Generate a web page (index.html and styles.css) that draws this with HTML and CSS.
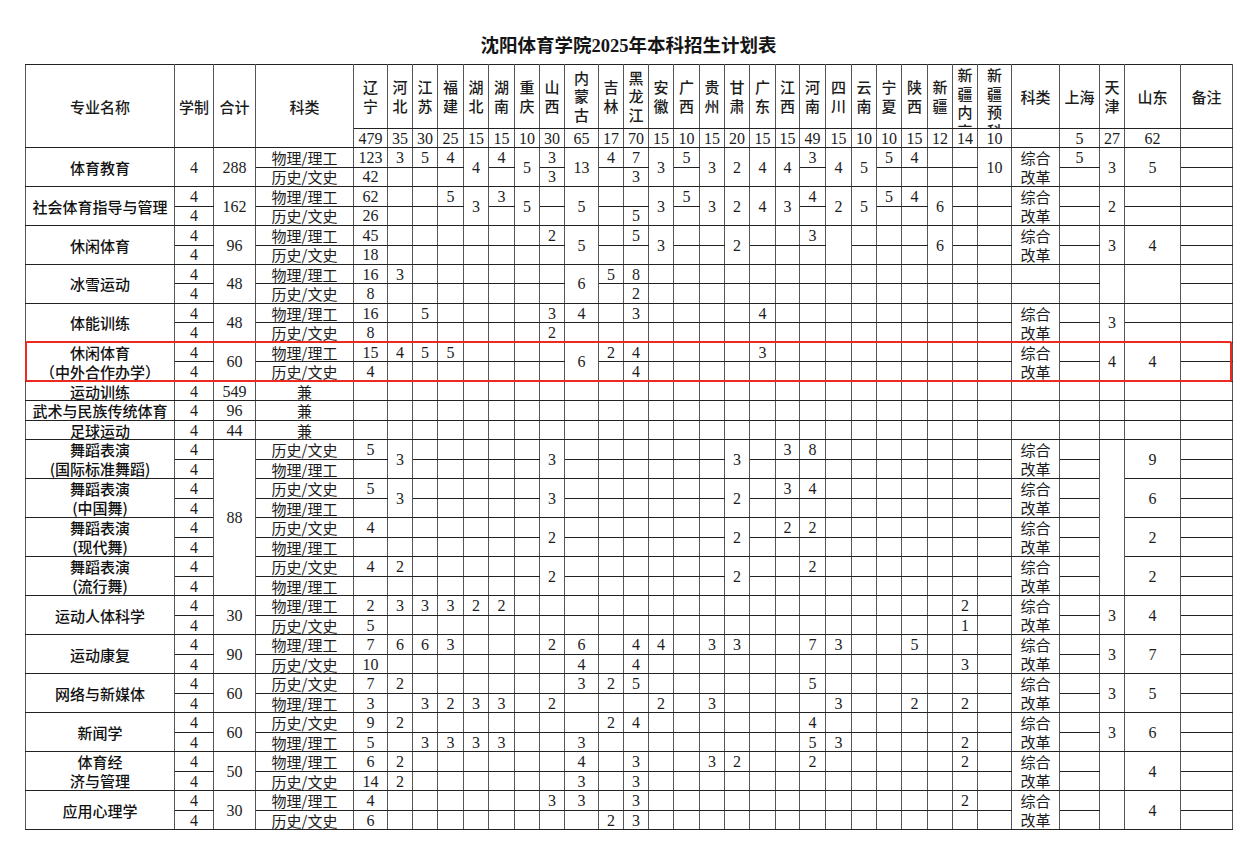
FILE: index.html
```html
<!DOCTYPE html>
<html lang="zh-CN">
<head>
<meta charset="utf-8">
<title>沈阳体育学院2025年本科招生计划表</title>
<link rel="stylesheet" href="styles.css">
</head>
<body>
<div class="page">
<div class="title">沈阳体育学院2025年本科招生计划表</div>
<div class="sheet">
<table class="plan">
<colgroup>
<col class="cw-name"><col class="cw-xz"><col class="cw-hj"><col class="cw-kl">
<col class="cw-34"><col class="cw-25"><col class="cw-25"><col class="cw-26"><col class="cw-25"><col class="cw-26"><col class="cw-25"><col class="cw-25"><col class="cw-34"><col class="cw-25"><col class="cw-25"><col class="cw-25"><col class="cw-26"><col class="cw-25"><col class="cw-25"><col class="cw-26"><col class="cw-24"><col class="cw-26"><col class="cw-26"><col class="cw-25"><col class="cw-25"><col class="cw-26"><col class="cw-25"><col class="cw-25"><col class="cw-34">
<col class="cw-kl2"><col class="cw-sh"><col class="cw-25"><col class="cw-sd"><col class="cw-bz">
</colgroup>
<thead>
<tr class="h1"><th rowspan="2">专业名称</th><th rowspan="2">学制</th><th rowspan="2">合计</th><th rowspan="2">科类</th><th class="v">辽<br>宁</th><th class="v">河<br>北</th><th class="v">江<br>苏</th><th class="v">福<br>建</th><th class="v">湖<br>北</th><th class="v">湖<br>南</th><th class="v">重<br>庆</th><th class="v">山<br>西</th><th class="v">内<br>蒙<br>古</th><th class="v">吉<br>林</th><th class="v">黑<br>龙<br>江</th><th class="v">安<br>徽</th><th class="v">广<br>西</th><th class="v">贵<br>州</th><th class="v">甘<br>肃</th><th class="v">广<br>东</th><th class="v">江<br>西</th><th class="v">河<br>南</th><th class="v">四<br>川</th><th class="v">云<br>南</th><th class="v">宁<br>夏</th><th class="v">陕<br>西</th><th class="v">新<br>疆</th><th class="v top"><div class="clip">新<br>疆<br>内<br>高</div></th><th class="v top"><div class="clip">新<br>疆<br>预<br>科</div></th><th>科类</th><th>上海</th><th class="v">天<br>津</th><th>山东</th><th>备注</th></tr>
<tr class="h2"><th>479</th><th>35</th><th>30</th><th>25</th><th>15</th><th>15</th><th>10</th><th>30</th><th>65</th><th>17</th><th>70</th><th>15</th><th>10</th><th>15</th><th>20</th><th>15</th><th>15</th><th>49</th><th>15</th><th>10</th><th>10</th><th>15</th><th>12</th><th>14</th><th>10</th><th></th><th>5</th><th>27</th><th>62</th><th></th></tr>
</thead>
<tbody>
<tr><td class="nm" rowspan="2">体育教育</td><td rowspan="2">4</td><td rowspan="2">288</td><td class="k">物理/理工</td><td>123</td><td>3</td><td>5</td><td>4</td><td rowspan="2">4</td><td>4</td><td rowspan="2">5</td><td>3</td><td rowspan="2">13</td><td>4</td><td>7</td><td rowspan="2">3</td><td>5</td><td rowspan="2">3</td><td rowspan="2">2</td><td rowspan="2">4</td><td rowspan="2">4</td><td>3</td><td rowspan="2">4</td><td rowspan="2">5</td><td>5</td><td>4</td><td></td><td></td><td rowspan="2">10</td><td class="two" rowspan="2">综合<br>改革</td><td>5</td><td rowspan="2">3</td><td rowspan="2">5</td><td></td></tr>
<tr><td class="k">历史/文史</td><td>42</td><td></td><td></td><td></td><td></td><td>3</td><td></td><td>3</td><td></td><td></td><td></td><td></td><td></td><td></td><td></td><td></td></tr>

<tr><td class="nm" rowspan="2">社会体育指导与管理</td><td>4</td><td rowspan="2">162</td><td class="k">物理/理工</td><td>62</td><td></td><td></td><td>5</td><td rowspan="2">3</td><td>3</td><td rowspan="2">5</td><td></td><td rowspan="2">5</td><td></td><td></td><td rowspan="2">3</td><td>5</td><td rowspan="2">3</td><td rowspan="2">2</td><td rowspan="2">4</td><td rowspan="2">3</td><td>4</td><td rowspan="2">2</td><td rowspan="2">5</td><td>5</td><td>4</td><td rowspan="2">6</td><td></td><td></td><td class="two" rowspan="2">综合<br>改革</td><td></td><td rowspan="2">2</td><td></td><td></td></tr>
<tr><td>4</td><td class="k">历史/文史</td><td>26</td><td></td><td></td><td></td><td></td><td></td><td></td><td>5</td><td></td><td></td><td></td><td></td><td></td><td></td><td></td><td></td><td></td></tr>

<tr><td class="nm" rowspan="2">休闲体育</td><td>4</td><td rowspan="2">96</td><td class="k">物理/理工</td><td>45</td><td></td><td></td><td></td><td></td><td></td><td></td><td>2</td><td rowspan="2">5</td><td></td><td>5</td><td rowspan="2">3</td><td></td><td></td><td rowspan="2">2</td><td></td><td></td><td>3</td><td rowspan="2"></td><td></td><td></td><td></td><td rowspan="2">6</td><td></td><td></td><td class="two" rowspan="2">综合<br>改革</td><td></td><td rowspan="2">3</td><td rowspan="2">4</td><td></td></tr>
<tr><td>4</td><td class="k">历史/文史</td><td>18</td><td></td><td></td><td></td><td></td><td></td><td></td><td></td><td></td><td></td><td></td><td></td><td></td><td></td><td></td><td></td><td></td><td></td><td></td><td></td><td></td><td></td></tr>

<tr><td class="nm" rowspan="2">冰雪运动</td><td>4</td><td rowspan="2">48</td><td class="k">物理/理工</td><td>16</td><td>3</td><td></td><td></td><td></td><td></td><td></td><td></td><td rowspan="2">6</td><td>5</td><td>8</td><td></td><td></td><td></td><td></td><td></td><td></td><td></td><td></td><td></td><td></td><td></td><td></td><td></td><td></td><td></td><td></td><td rowspan="2"></td><td rowspan="2"></td><td></td></tr>
<tr><td>4</td><td class="k">历史/文史</td><td>8</td><td></td><td></td><td></td><td></td><td></td><td></td><td></td><td></td><td>2</td><td></td><td></td><td></td><td></td><td></td><td></td><td></td><td></td><td></td><td></td><td></td><td></td><td></td><td></td><td></td><td></td><td></td></tr>

<tr><td class="nm" rowspan="2">体能训练</td><td>4</td><td rowspan="2">48</td><td class="k">物理/理工</td><td>16</td><td></td><td>5</td><td></td><td></td><td></td><td></td><td>3</td><td>4</td><td></td><td>3</td><td></td><td></td><td></td><td></td><td>4</td><td></td><td></td><td></td><td></td><td></td><td></td><td></td><td></td><td></td><td class="two" rowspan="2">综合<br>改革</td><td></td><td rowspan="2">3</td><td></td><td></td></tr>
<tr><td>4</td><td class="k">历史/文史</td><td>8</td><td></td><td></td><td></td><td></td><td></td><td></td><td>2</td><td></td><td></td><td></td><td></td><td></td><td></td><td></td><td></td><td></td><td></td><td></td><td></td><td></td><td></td><td></td><td></td><td></td><td></td><td></td><td></td></tr>

<tr><td class="nm two" rowspan="2">休闲体育<br>（中外合作办学）</td><td>4</td><td rowspan="2">60</td><td class="k">物理/理工</td><td>15</td><td>4</td><td>5</td><td>5</td><td></td><td></td><td></td><td></td><td rowspan="2">6</td><td>2</td><td>4</td><td></td><td></td><td></td><td></td><td>3</td><td></td><td></td><td></td><td></td><td></td><td></td><td></td><td></td><td></td><td class="two" rowspan="2">综合<br>改革</td><td></td><td rowspan="2">4</td><td rowspan="2">4</td><td></td></tr>
<tr><td>4</td><td class="k">历史/文史</td><td>4</td><td></td><td></td><td></td><td></td><td></td><td></td><td></td><td></td><td>4</td><td></td><td></td><td></td><td></td><td></td><td></td><td></td><td></td><td></td><td></td><td></td><td></td><td></td><td></td><td></td><td></td></tr>

<tr><td class="nm">运动训练</td><td>4</td><td>549</td><td class="k">兼</td><td></td><td></td><td></td><td></td><td></td><td></td><td></td><td></td><td></td><td></td><td></td><td></td><td></td><td></td><td></td><td></td><td></td><td></td><td></td><td></td><td></td><td></td><td></td><td></td><td></td><td></td><td></td><td></td><td></td><td></td></tr>
<tr><td class="nm">武术与民族传统体育</td><td>4</td><td>96</td><td class="k">兼</td><td></td><td></td><td></td><td></td><td></td><td></td><td></td><td></td><td></td><td></td><td></td><td></td><td></td><td></td><td></td><td></td><td></td><td></td><td></td><td></td><td></td><td></td><td></td><td></td><td></td><td></td><td></td><td></td><td></td><td></td></tr>
<tr><td class="nm">足球运动</td><td>4</td><td>44</td><td class="k">兼</td><td></td><td></td><td></td><td></td><td></td><td></td><td></td><td></td><td></td><td></td><td></td><td></td><td></td><td></td><td></td><td></td><td></td><td></td><td></td><td></td><td></td><td></td><td></td><td></td><td></td><td></td><td></td><td></td><td></td><td></td></tr>

<tr class="sep"><td class="nm two" rowspan="2">舞蹈表演<br>(国际标准舞蹈)</td><td>4</td><td rowspan="8">88</td><td class="k">历史/文史</td><td>5</td><td rowspan="2">3</td><td></td><td></td><td></td><td></td><td></td><td rowspan="2">3</td><td></td><td></td><td></td><td></td><td></td><td></td><td rowspan="2">3</td><td></td><td>3</td><td>8</td><td></td><td></td><td></td><td></td><td></td><td></td><td></td><td class="two" rowspan="2">综合<br>改革</td><td></td><td rowspan="8"></td><td rowspan="2">9</td><td></td></tr>
<tr><td>4</td><td class="k">物理/理工</td><td></td><td></td><td></td><td></td><td></td><td></td><td></td><td></td><td></td><td></td><td></td><td></td><td></td><td></td><td></td><td></td><td></td><td></td><td></td><td></td><td></td><td></td><td></td><td></td></tr>

<tr><td class="nm two" rowspan="2">舞蹈表演<br>(中国舞)</td><td>4</td><td class="k">历史/文史</td><td>5</td><td rowspan="2">3</td><td></td><td></td><td></td><td></td><td></td><td rowspan="2">3</td><td></td><td></td><td></td><td></td><td></td><td></td><td rowspan="2">2</td><td></td><td>3</td><td>4</td><td></td><td></td><td></td><td></td><td></td><td></td><td></td><td class="two" rowspan="2">综合<br>改革</td><td></td><td rowspan="2">6</td><td></td></tr>
<tr><td>4</td><td class="k">物理/理工</td><td></td><td></td><td></td><td></td><td></td><td></td><td></td><td></td><td></td><td></td><td></td><td></td><td></td><td></td><td></td><td></td><td></td><td></td><td></td><td></td><td></td><td></td><td></td><td></td></tr>

<tr><td class="nm two" rowspan="2">舞蹈表演<br>(现代舞)</td><td>4</td><td class="k">历史/文史</td><td>4</td><td></td><td></td><td></td><td></td><td></td><td></td><td rowspan="2">2</td><td></td><td></td><td></td><td></td><td></td><td></td><td rowspan="2">2</td><td></td><td>2</td><td>2</td><td></td><td></td><td></td><td></td><td></td><td></td><td></td><td class="two" rowspan="2">综合<br>改革</td><td></td><td rowspan="2">2</td><td></td></tr>
<tr><td>4</td><td class="k">物理/理工</td><td></td><td></td><td></td><td></td><td></td><td></td><td></td><td></td><td></td><td></td><td></td><td></td><td></td><td></td><td></td><td></td><td></td><td></td><td></td><td></td><td></td><td></td><td></td><td></td><td></td></tr>

<tr><td class="nm two" rowspan="2">舞蹈表演<br>(流行舞)</td><td>4</td><td class="k">历史/文史</td><td>4</td><td>2</td><td></td><td></td><td></td><td></td><td></td><td rowspan="2">2</td><td></td><td></td><td></td><td></td><td></td><td></td><td rowspan="2">2</td><td></td><td></td><td>2</td><td></td><td></td><td></td><td></td><td></td><td></td><td></td><td class="two" rowspan="2">综合<br>改革</td><td></td><td rowspan="2">2</td><td></td></tr>
<tr><td>4</td><td class="k">物理/理工</td><td></td><td></td><td></td><td></td><td></td><td></td><td></td><td></td><td></td><td></td><td></td><td></td><td></td><td></td><td></td><td></td><td></td><td></td><td></td><td></td><td></td><td></td><td></td><td></td><td></td></tr>

<tr class="sep"><td class="nm" rowspan="2">运动人体科学</td><td>4</td><td rowspan="2">30</td><td class="k">物理/理工</td><td>2</td><td>3</td><td>3</td><td>3</td><td>2</td><td>2</td><td></td><td></td><td></td><td></td><td></td><td></td><td></td><td></td><td></td><td></td><td></td><td></td><td></td><td></td><td></td><td></td><td></td><td>2</td><td></td><td class="two" rowspan="2">综合<br>改革</td><td></td><td rowspan="2">3</td><td rowspan="2">4</td><td></td></tr>
<tr><td>4</td><td class="k">历史/文史</td><td>5</td><td></td><td></td><td></td><td></td><td></td><td></td><td></td><td></td><td></td><td></td><td></td><td></td><td></td><td></td><td></td><td></td><td></td><td></td><td></td><td></td><td></td><td></td><td>1</td><td></td><td></td><td></td></tr>

<tr class="sep"><td class="nm" rowspan="2">运动康复</td><td>4</td><td rowspan="2">90</td><td class="k">物理/理工</td><td>7</td><td>6</td><td>6</td><td>3</td><td></td><td></td><td></td><td>2</td><td>6</td><td></td><td>4</td><td>4</td><td></td><td>3</td><td>3</td><td></td><td></td><td>7</td><td>3</td><td></td><td></td><td>5</td><td></td><td></td><td></td><td class="two" rowspan="2">综合<br>改革</td><td></td><td rowspan="2">3</td><td rowspan="2">7</td><td></td></tr>
<tr><td>4</td><td class="k">历史/文史</td><td>10</td><td></td><td></td><td></td><td></td><td></td><td></td><td></td><td>4</td><td></td><td>4</td><td></td><td></td><td></td><td></td><td></td><td></td><td></td><td></td><td></td><td></td><td></td><td></td><td>3</td><td></td><td></td><td></td></tr>

<tr><td class="nm" rowspan="2">网络与新媒体</td><td>4</td><td rowspan="2">60</td><td class="k">历史/文史</td><td>7</td><td>2</td><td></td><td></td><td></td><td></td><td></td><td></td><td>3</td><td>2</td><td>5</td><td></td><td></td><td></td><td></td><td></td><td></td><td>5</td><td></td><td></td><td></td><td></td><td></td><td></td><td></td><td class="two" rowspan="2">综合<br>改革</td><td></td><td rowspan="2">3</td><td rowspan="2">5</td><td></td></tr>
<tr><td>4</td><td class="k">物理/理工</td><td>3</td><td></td><td>3</td><td>2</td><td>3</td><td>3</td><td></td><td>2</td><td></td><td></td><td></td><td>2</td><td></td><td>3</td><td></td><td></td><td></td><td></td><td>3</td><td></td><td></td><td>2</td><td></td><td>2</td><td></td><td></td><td></td></tr>

<tr><td class="nm" rowspan="2">新闻学</td><td>4</td><td rowspan="2">60</td><td class="k">历史/文史</td><td>9</td><td>2</td><td></td><td></td><td></td><td></td><td></td><td></td><td></td><td>2</td><td>4</td><td></td><td></td><td></td><td></td><td></td><td></td><td>4</td><td></td><td></td><td></td><td></td><td></td><td></td><td></td><td class="two" rowspan="2">综合<br>改革</td><td></td><td rowspan="2">3</td><td rowspan="2">6</td><td></td></tr>
<tr><td>4</td><td class="k">物理/理工</td><td>5</td><td></td><td>3</td><td>3</td><td>3</td><td>3</td><td></td><td></td><td>3</td><td></td><td></td><td></td><td></td><td></td><td></td><td></td><td></td><td>5</td><td>3</td><td></td><td></td><td></td><td></td><td>2</td><td></td><td></td><td></td></tr>

<tr><td class="nm two" rowspan="2">体育经<br>济与管理</td><td>4</td><td rowspan="2">50</td><td class="k">物理/理工</td><td>6</td><td>2</td><td></td><td></td><td></td><td></td><td></td><td></td><td>4</td><td></td><td>3</td><td></td><td></td><td>3</td><td>2</td><td></td><td></td><td>2</td><td></td><td></td><td></td><td></td><td></td><td>2</td><td></td><td class="two" rowspan="2">综合<br>改革</td><td></td><td rowspan="2"></td><td rowspan="2">4</td><td></td></tr>
<tr><td>4</td><td class="k">历史/文史</td><td>14</td><td>2</td><td></td><td></td><td></td><td></td><td></td><td></td><td>3</td><td></td><td>3</td><td></td><td></td><td></td><td></td><td></td><td></td><td></td><td></td><td></td><td></td><td></td><td></td><td></td><td></td><td></td><td></td></tr>

<tr><td class="nm" rowspan="2">应用心理学</td><td>4</td><td rowspan="2">30</td><td class="k">物理/理工</td><td>4</td><td></td><td></td><td></td><td></td><td></td><td></td><td>3</td><td>3</td><td></td><td>3</td><td></td><td></td><td></td><td></td><td></td><td></td><td></td><td></td><td></td><td></td><td></td><td></td><td>2</td><td></td><td class="two" rowspan="2">综合<br>改革</td><td></td><td rowspan="2"></td><td rowspan="2">4</td><td></td></tr>
<tr><td>4</td><td class="k">历史/文史</td><td>6</td><td></td><td></td><td></td><td></td><td></td><td></td><td></td><td></td><td>2</td><td>3</td><td></td><td></td><td></td><td></td><td></td><td></td><td></td><td></td><td></td><td></td><td></td><td></td><td></td><td></td><td></td><td></td></tr>
</tbody>
</table>
<div class="mark"></div>
</div>
</div>
</body>
</html>
```

FILE: styles.css
```css
html, body {
  margin: 0;
  padding: 0;
  background: #ffffff;
}

body {
  font-family: "Liberation Serif", "Noto Sans CJK SC", serif;
  color: #1c1c1c;
}

.page {
  width: 1207px;
  padding: 32px 0 0 25px;
}

.title {
  height: 28px;
  line-height: 28px;
  margin-bottom: 4px;
  text-align: center;
  font-size: 18.5px;
  font-weight: 700;
  color: #151515;
}

.sheet {
  position: relative;
}

.plan {
  width: 1207px;
  table-layout: fixed;
  border-collapse: collapse;
  font-size: 16px;
  line-height: 17px;
}

.plan th,
.plan td {
  border: 1px solid;
  border-color: #222 #555;
  padding: 0;
  text-align: center;
  vertical-align: middle;
  overflow: hidden;
  white-space: nowrap;
  font-weight: normal;
}

.plan th,
.plan .nm,
.plan .k,
.plan .two {
  font-family: "Noto Sans CJK SC", "Liberation Serif", sans-serif;
  font-size: 15px;
}

.plan th,
.plan .nm {
  font-weight: 500;
}

.plan .h2 th {
  font-family: "Liberation Serif", "Noto Sans CJK SC", serif;
  font-size: 16px;
  font-weight: normal;
}

.plan .h1 { height: 64px; }
.plan .h2 { height: 19px; }
.plan tbody tr { height: 19.46px; }

.plan th.v { line-height: 18.5px; }
.plan th.top { vertical-align: top; }
.plan .clip {
  height: 62px;
  overflow: hidden;
  padding-top: 1px;
}

.plan .nm { color: #111; }
.plan .two { line-height: 19px; }
.plan tr.sep > td { border-top-color: #777; }

.cw-name { width: 149px; }
.cw-xz { width: 39px; }
.cw-hj { width: 42px; }
.cw-kl { width: 98px; }
.cw-34 { width: 34px; }
.cw-26 { width: 26px; }
.cw-25 { width: 25px; }
.cw-24 { width: 24px; }
.cw-kl2 { width: 48px; }
.cw-sh { width: 40px; }
.cw-sd { width: 56px; }
.cw-bz { width: 52px; }

.mark {
  position: absolute;
  left: 0;
  top: 277px;
  width: 1207px;
  height: 41px;
  box-sizing: border-box;
  border: 2.5px solid #ec2a22;
  border-radius: 2px;
}
```
